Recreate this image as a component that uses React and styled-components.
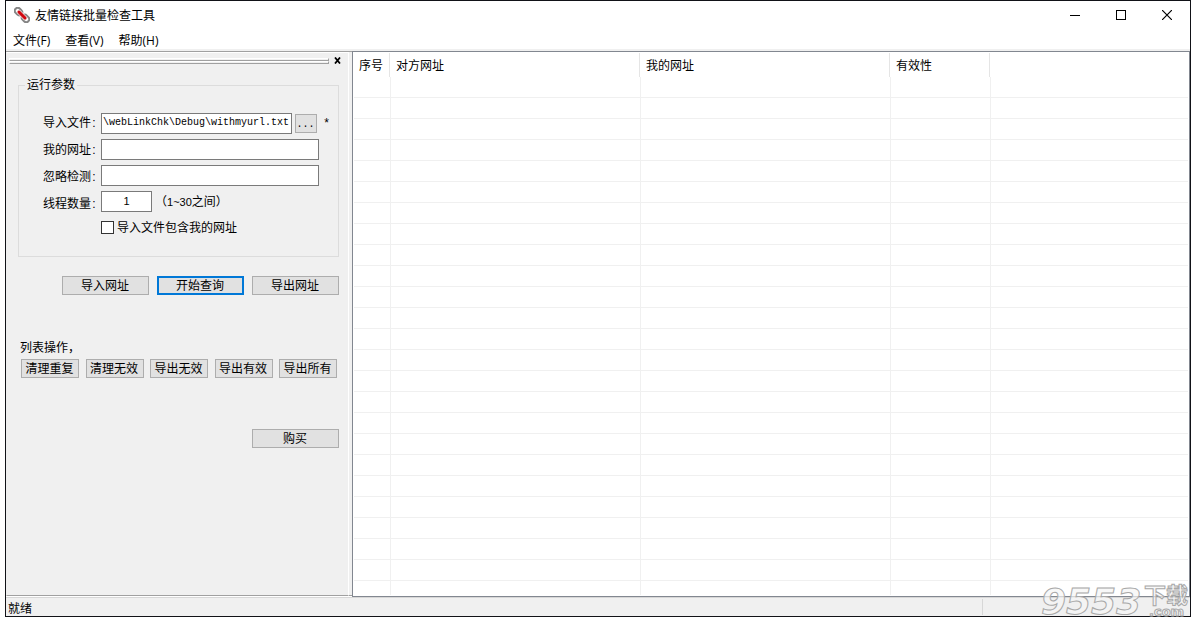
import React from "react";
import styled, { createGlobalStyle, css } from "styled-components";

const GlobalStyle = createGlobalStyle`
  * { box-sizing: border-box; }
  body {
    margin: 0;
    background: #fff;
    color: #000;
    font: 12px/16px "Liberation Sans", "Noto Sans CJK SC", sans-serif;
  }
  button, input {
    margin: 0;
    color: inherit;
    font: inherit;
  }
`;

const Window = styled.div`
  display: flex;
  flex-direction: column;
  min-height: calc(100vh - 5px);
  margin: 0 5px;
  border: 1px solid #111217;
`;

const TitleBar = styled.header`
  display: flex;
  align-items: center;
  gap: 5px;
  height: 28px;
  padding-left: 8px;
`;

const Title = styled.h1`
  flex: 1;
  margin: 0;
  padding-top: 2px;
  font-size: 12px;
  font-weight: 400;
`;

const Controls = styled.div`
  display: flex;
  align-self: stretch;
`;

const ControlButton = styled.button`
  display: flex;
  align-items: center;
  justify-content: center;
  width: 46px;
  padding: 0;
  border: 0;
  background: none;
`;

const MenuBar = styled.nav`
  display: flex;
  gap: 15px;
  height: 22px;
  padding: 4px 7px 0;
  border-bottom: 2px solid #f0f0f0;
`;

const MenuItem = styled.button`
  height: 16px;
  padding: 0;
  border: 0;
  background: none;
  font-family: "Open Sans", "Noto Sans CJK SC", sans-serif;
`;

const Main = styled.main`
  display: flex;
  flex: 1;
`;

const Sidebar = styled.aside`
  flex: 0 0 346px;
  padding-right: 3px;
  border-top: 1px solid #a0a0a0;
  border-bottom: 1px solid #fff;
  background: #f0f0f0;
  box-shadow: inset 0 -1px #a0a0a0;
`;

const SidebarInner = styled.div`
  height: 100%;
  padding: 4px 9px 0 4px;
  border: 1px solid;
  border-color: #fff #fff #a0a0a0 #f0f0f0;
`;

const Gripper = styled.div`
  display: flex;
  align-items: center;
  gap: 5px;
  margin: 0 -2px 0 -2px;
`;

const Rails = styled.div`
  flex: 1;
`;

const Rail = styled.div`
  height: 3px;
  border: 1px solid;
  border-color: #fff #a0a0a0 #a0a0a0 #fff;
`;

const CloseButton = styled.button`
  display: flex;
  padding: 0;
  border: 0;
  background: none;
`;

const Group = styled.fieldset`
  display: flex;
  gap: 4px;
  min-width: 0;
  height: 180px;
  margin: 13px 0 0 7px;
  padding: 16px 0 0 19px;
  border: 1px solid #dcdcdc;
`;

const Legend = styled.legend`
  margin-left: -13px;
  padding: 0 2px;
`;

const Labels = styled.div`
  display: flex;
  flex-direction: column;
  flex: 0 0 59px;
  align-items: flex-end;
  padding-top: 1px;
`;

const FieldLabel = styled.label`
  white-space: nowrap;
  line-height: 27px;
`;

const Colon = styled.span`
  display: inline-block;
  width: 6px;
  text-align: center;
`;

const Fields = styled.div`
  display: flex;
  flex-direction: column;
  gap: 5px;
  padding-top: 4px;
`;

const FieldRow = styled.div`
  display: flex;
  align-items: center;
  gap: 3px;
  height: 21px;
`;

const TextInput = styled.input`
  width: ${(p) => p.$width}px;
  height: 21px;
  padding: 0 1px 2px;
  border: 1px solid #7a7a7a;
  border-radius: 0;
  background: #fff;
  font: 10px/16px "Liberation Mono", monospace;
  text-align: ${(p) => p.$align || "left"};
`;

const ThreadInput = styled(TextInput)`
  font: 11px/16px "Liberation Sans", sans-serif;
`;

const Range = styled.span`
  font-size: 11px;
`;

const Mono = styled.span`
  font-family: "Liberation Mono", monospace;
  font-size: 10px;
`;

const Required = styled.span`
  padding-left: 3px;
  font: 12px/16px "Liberation Mono", monospace;
`;

const CheckLabel = styled.label`
  display: flex;
  align-items: center;
  gap: 3px;
`;

const Checkbox = styled.input`
  appearance: none;
  width: 13px;
  height: 13px;
  border: 1px solid #333;
  background: #fff;
`;

const PushButton = styled.button`
  width: ${(p) => p.$width}px;
  height: 19px;
  padding: 0 1px 0 0;
  border: 1px solid #adadad;
  border-radius: 0;
  background: #e1e1e1;
  line-height: 16px;
  white-space: nowrap;
  ${(p) =>
    p.$primary &&
    css`
      border: 2px solid #0078d7;
      line-height: 14px;
    `}
`;

const Actions = styled.div`
  display: flex;
  justify-content: flex-end;
  gap: 8px;
  margin-top: ${(p) => p.$top}px;
`;

const ListTitle = styled.h2`
  margin: 45px 0 0 9px;
  font-size: 12px;
  font-weight: 400;
`;

const ListActions = styled.div`
  display: flex;
  justify-content: space-between;
  margin: 3px 2px 0 10px;
`;

const ListView = styled.section`
  flex: 1;
  min-width: 0;
  padding: 1px;
  border: 1px solid #828790;
  background: #fff;
  display: flex;
`;

const Table = styled.table`
  flex: 1;
  width: 100%;
  height: 100%;
  table-layout: fixed;
  border-spacing: 0;
`;

const HeadCell = styled.th`
  height: 24px;
  padding: 0 1px 0 0;
  font-weight: 400;
  text-align: left;
  white-space: nowrap;
`;

const HeadText = styled.div`
  height: 24px;
  padding-left: 5px;
  border-right: 1px solid ${(p) => (p.$last ? "transparent" : "#e5e5e5")};
  line-height: 26px;
`;

const Cell = styled.td`
  padding: 0;
  border-right: 1px solid #f0f0f0;
  &:last-child { border-right: 0; }
`;

const Row = styled.tr`
  height: 21px;
  ${Cell} { border-bottom: 1px solid #f0f0f0; }
`;

const StatusBar = styled.footer`
  display: flex;
  height: 19px;
  padding: 1px 0 1px 2px;
  border-top: 1px solid #d7d7d7;
  background: #f0f0f0;
`;

const StatusText = styled.span`
  flex: 1;
  padding-top: 2px;
`;

const StatusPane = styled.span`
  width: 208px;
  border-left: 1px solid #d7d7d7;
`;

const Watermark = styled.svg`
  position: absolute;
  right: 4px;
  bottom: 0;
`;

const COLUMNS = [
  { name: "序号", width: 37 },
  { name: "对方网址", width: 250 },
  { name: "我的网址", width: 250 },
  { name: "有效性", width: 100 },
  { name: "" },
];
const ROW_COUNT = 24;
const MENUS = ["文件(F)", "查看(V)", "帮助(H)"];
const LIST_ACTIONS = ["清理重复", "清理无效", "导出无效", "导出有效", "导出所有"];

function ChainIcon() {
  return (
    <svg width="16" height="16" viewBox="0 0 16 16" fill="none" aria-hidden="true">
      <rect x="-4" y="-3" width="8" height="6" rx="3" transform="translate(4.5 4.5) rotate(45)" stroke="#858585" strokeWidth="2" />
      <rect x="-4" y="-3" width="8" height="6" rx="3" transform="translate(11.5 11.5) rotate(45)" stroke="#858585" strokeWidth="2" />
      <path d="M5 5 11 11" stroke="#f3d9d9" strokeWidth="4.4" strokeLinecap="round" />
      <path d="M5 5 11 11" stroke="#d00810" strokeWidth="3" strokeLinecap="round" />
    </svg>
  );
}

function Field({ id, children }) {
  return (
    <FieldLabel htmlFor={id}>
      {children}
      <Colon>:</Colon>
    </FieldLabel>
  );
}

export default function App() {
  return (
    <>
      <GlobalStyle />
      <Window>
        <TitleBar>
          <ChainIcon />
          <Title>友情链接批量检查工具</Title>
          <Controls>
            <ControlButton aria-label="最小化">
              <svg width="10" height="10"><path d="M0 5.5H10" stroke="#000" /></svg>
            </ControlButton>
            <ControlButton aria-label="最大化">
              <svg width="10" height="10"><rect x=".5" y=".5" width="9" height="9" fill="none" stroke="#000" /></svg>
            </ControlButton>
            <ControlButton aria-label="关闭">
              <svg width="10" height="10"><path d="M0 0 10 10M10 0 0 10" stroke="#000" strokeWidth="1.2" /></svg>
            </ControlButton>
          </Controls>
        </TitleBar>
        <MenuBar>
          {MENUS.map((m) => <MenuItem key={m}>{m}</MenuItem>)}
        </MenuBar>
        <Main>
          <Sidebar>
            <SidebarInner>
              <Gripper>
                <Rails><Rail /><Rail /></Rails>
                <CloseButton aria-label="关闭面板">
                  <svg width="7" height="7"><path d="M1 .5 6 6.5M6 .5 1 6.5" stroke="#000" strokeWidth="1.8" /></svg>
                </CloseButton>
              </Gripper>
              <Group>
                <Legend>运行参数</Legend>
                <Labels>
                  <Field id="file">导入文件</Field>
                  <Field id="mine">我的网址</Field>
                  <Field id="skip">忽略检测</Field>
                  <Field id="threads">线程数量</Field>
                </Labels>
                <Fields>
                  <FieldRow>
                    <TextInput id="file" $width={191} defaultValue="\webLinkChk\Debug\withmyurl.txt" />
                    <PushButton $width={22}><Mono>...</Mono></PushButton>
                    <Required>*</Required>
                  </FieldRow>
                  <FieldRow><TextInput id="mine" $width={218} /></FieldRow>
                  <FieldRow><TextInput id="skip" $width={218} /></FieldRow>
                  <FieldRow>
                    <ThreadInput id="threads" $width={51} $align="center" defaultValue="1" />
                    <span>（<Range>1~30</Range>之间）</span>
                  </FieldRow>
                  <FieldRow>
                    <CheckLabel>
                      <Checkbox type="checkbox" />
                      导入文件包含我的网址
                    </CheckLabel>
                  </FieldRow>
                </Fields>
              </Group>
              <Actions $top={19}>
                <PushButton $width={87}>导入网址</PushButton>
                <PushButton $width={87} $primary>开始查询</PushButton>
                <PushButton $width={87}>导出网址</PushButton>
              </Actions>
              <ListTitle>列表操作，</ListTitle>
              <ListActions>
                {LIST_ACTIONS.map((a) => <PushButton key={a} $width={58}>{a}</PushButton>)}
              </ListActions>
              <Actions $top={51}>
                <PushButton $width={87}>购买</PushButton>
              </Actions>
            </SidebarInner>
          </Sidebar>
          <ListView>
            <Table>
              <colgroup>
                {COLUMNS.map((c, i) => <col key={i} width={c.width} />)}
              </colgroup>
              <thead>
                <tr>
                  {COLUMNS.map((c, i) => (
                    <HeadCell key={i}><HeadText $last={!c.name}>{c.name}</HeadText></HeadCell>
                  ))}
                </tr>
              </thead>
              <tbody>
                {Array.from({ length: ROW_COUNT }, (_, r) => (
                  <Row key={r}>{COLUMNS.map((c, i) => <Cell key={i} />)}</Row>
                ))}
                <tr>{COLUMNS.map((c, i) => <Cell key={i} />)}</tr>
              </tbody>
            </Table>
          </ListView>
        </Main>
        <StatusBar>
          <StatusText>就绪</StatusText>
          <StatusPane />
        </StatusBar>
      </Window>
      <Watermark width="152" height="48" fill="#f6f6f6" fillOpacity=".7" stroke="#a8a8a8" strokeWidth="1">
        <text x="1" y="40" fontFamily="DejaVu Sans" fontSize="36" fontWeight="700" fontStyle="italic">9553</text>
        <text x="104" y="29" fontFamily="Noto Sans CJK SC" fontSize="22" fontWeight="700">下载</text>
        <text x="109" y="42" fontFamily="DejaVu Sans" fontSize="13" fontWeight="700">.com</text>
      </Watermark>
    </>
  );
}
